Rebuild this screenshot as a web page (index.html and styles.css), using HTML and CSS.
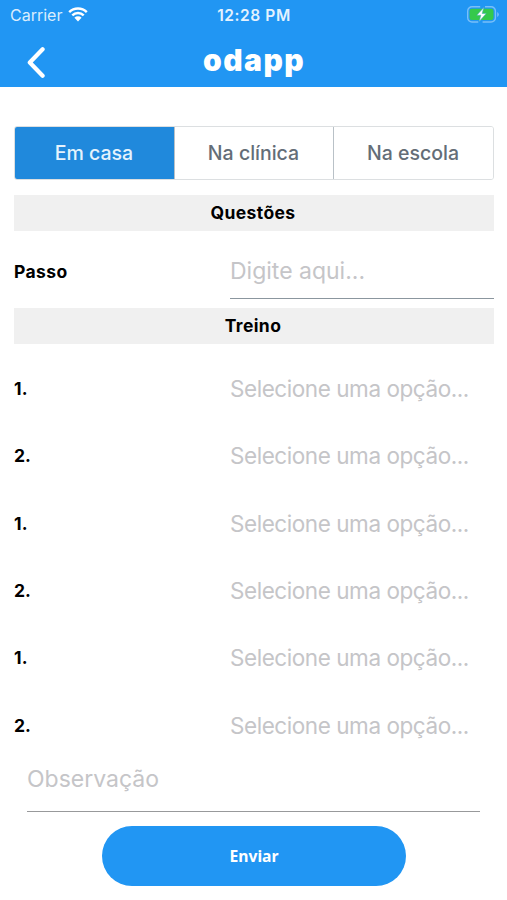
FILE: index.html
```html
<!DOCTYPE html>
<html lang="pt-BR">
<head>
<meta charset="utf-8">
<meta name="viewport" content="width=device-width, initial-scale=1">
<title>odapp</title>
<link rel="stylesheet" href="styles.css">
</head>
<body>
<header class="header">
  <div class="status">
    <div class="status-left">
      <span class="carrier">Carrier</span>
      <svg class="wifi" width="20" height="15" viewBox="0 0 20 15">
        <path d="M1.2 5.1a12.7 12.7 0 0 1 17.6 0M4.3 8.4a8.2 8.2 0 0 1 11.4 0" fill="none" stroke="#fff" stroke-width="2.5"/>
        <path d="M6.4 10.8a5.2 5.2 0 0 1 7.2 0L10 14.4z" fill="#fff"/>
      </svg>
    </div>
    <span class="clock">12:28 PM</span>
    <svg class="battery" width="33" height="17" viewBox="0 0 33 17">
      <path d="M14.2.8H6A4.3 4.3 0 0 0 1.7 5.1v6.6A4.3 4.3 0 0 0 6 16h6.3M19 .8h6.1a4.3 4.3 0 0 1 4.3 4.3v6.6a4.3 4.3 0 0 1-4.3 4.3H16.6" fill="none" stroke="#79bff9" stroke-width="1.4"/>
      <path d="M31.2 6v5q1.6-.8 1.6-2.5T31.2 6z" fill="#79bff9"/>
      <rect x="3.6" y="2.8" width="23.9" height="11.2" rx="2.3" fill="#35c94b"/>
      <path d="M17.8 1.4 10.8 9.2h4L13.2 15.4l7-7.9h-4z" fill="#fff" stroke="#4bafb5" stroke-width=".6"/>
    </svg>
  </div>
  <div class="navbar">
    <svg class="back" width="20" height="32" viewBox="0 0 20 32">
      <path d="M16.6 3.3 3.8 16.5 16.6 29.7" fill="none" stroke="#fff" stroke-width="4.2" stroke-linecap="round" stroke-linejoin="round"/>
    </svg>
    <h1 class="brand">odapp</h1>
  </div>
</header>
<main class="content">
  <div class="tabs">
    <button class="tab active">Em casa</button>
    <button class="tab">Na clínica</button>
    <button class="tab">Na escola</button>
  </div>
  <h2 class="section">Questões</h2>
  <div class="row step"><label>Passo</label><span class="field">Digite aqui...</span></div>
  <h2 class="section">Treino</h2>
  <div class="list">
    <div class="row"><label>1.</label><span class="select">Selecione uma opção...</span></div>
    <div class="row"><label>2.</label><span class="select">Selecione uma opção...</span></div>
    <div class="row"><label>1.</label><span class="select">Selecione uma opção...</span></div>
    <div class="row"><label>2.</label><span class="select">Selecione uma opção...</span></div>
    <div class="row"><label>1.</label><span class="select">Selecione uma opção...</span></div>
    <div class="row"><label>2.</label><span class="select">Selecione uma opção...</span></div>
  </div>
  <div class="note">Observação</div>
  <button class="submit">Enviar</button>
</main>
</body>
</html>
```
FILE: styles.css
```css
* { box-sizing: border-box; }
body {
  margin: 0;
  height: 900px;
  overflow: hidden;
  background: #fff;
  color: #000;
  font-family: Inter, "Liberation Sans", sans-serif;
}
button { font: inherit; border: 0; padding: 0; }
.header { height: 87px; background: #2196f3; color: #fff; }
.status {
  height: 29px;
  padding: 0 8px 0 10px;
  display: grid;
  grid-template-columns: 1fr auto 1fr;
  align-items: center;
}
.status-left { display: flex; align-items: center; gap: 6px; }
.carrier { font-size: 16px; line-height: 20px; color: #d9edfd; }
.clock { font-size: 15.5px; line-height: 20px; font-weight: 600; letter-spacing: .6px; color: #e4f2fe; margin: 2px 1px 0 0; }
.battery { justify-self: end; }
.navbar {
  height: 58px;
  padding: 0 25px 0 26px;
  display: grid;
  grid-template-columns: 1fr auto 1fr;
  align-items: center;
}
.back { margin-top: 7px; }
.brand { margin: 4px 0 0; font-size: 30px; line-height: 36px; font-weight: 900; letter-spacing: 1.5px; }
.content { padding: 39px 13px 0 14px; }
.tabs {
  height: 54px;
  display: grid;
  grid-template-columns: 159px 159px 1fr;
  border: 1px solid #dcdfe1;
  border-radius: 3px;
  overflow: hidden;
}
.tab { background: #fff; color: #646d77; font-size: 19.5px; font-weight: 450; padding: 0 1px 1px 0; }
.tab + .tab { border-left: 1px solid #b9c1c7; }
.tab.active { background: #2089dc; color: #e5f3fd; }
.section {
  height: 36px;
  margin: 0;
  padding-right: 2px;
  background: #f0f0f0;
  text-align: center;
  font-size: 17.5px;
  line-height: 35px;
  font-weight: 700;
  letter-spacing: .4px;
}
.tabs + .section { margin-top: 15px; }
.row { display: grid; grid-template-columns: 216px 1fr; align-items: center; height: 67.4px; }
.row label { font-size: 17.5px; font-weight: 700; letter-spacing: .4px; }
.list label { letter-spacing: .1px; }
.field, .select, .note { color: #c5c5c8; font-size: 23px; white-space: nowrap; }
.select { font-size: 22.5px; letter-spacing: -.44px; }
.step { height: 68px; margin-bottom: 9px; align-items: end; }
.step label { line-height: 54px; }
.field { height: 54px; line-height: 53px; border-bottom: 1px solid #8b969e; }
.list { padding-top: 10.6px; }
.note { height: 53px; margin: .4px 14px 0 13px; line-height: 40px; border-bottom: 1px solid #98999b; }
.submit {
  display: block;
  width: 304px;
  height: 60px;
  margin: 14px auto 0;
  border-radius: 30px;
  background: #2196f3;
  color: #fff;
  font-family: "Noto Sans", sans-serif;
  font-size: 15.7px;
  font-weight: 700;
}
```
